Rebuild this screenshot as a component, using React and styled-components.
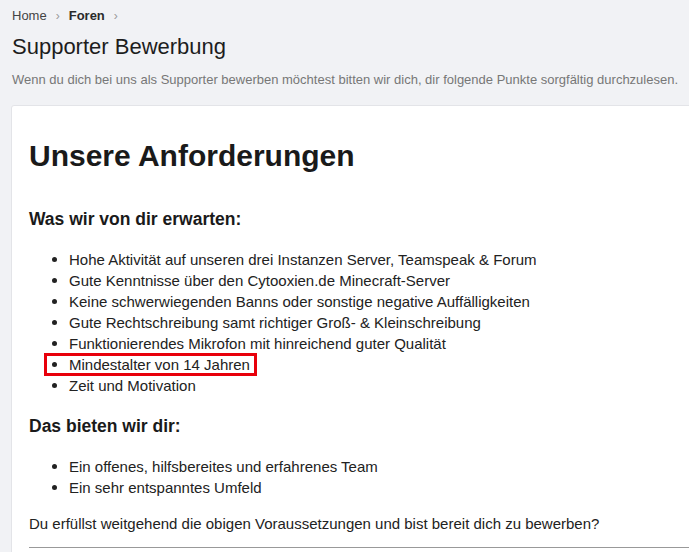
import React from "react";
import styled, { createGlobalStyle } from "styled-components";

const GlobalStyle = createGlobalStyle`
  html, body {
    margin: 0;
    padding: 0;
    background: #f1f2f5;
    overflow: hidden;
    font-family: "Liberation Sans", Arial, sans-serif;
    color: #1c1c1c;
  }
`;

const Page = styled.div`
  padding: 0 0 0 11px;
  width: 720px;
  height: 552px;
`;

const Breadcrumb = styled.nav`
  display: flex;
  align-items: center;
  gap: 7px;
  padding: 7px 0 0 1px;
  font-size: 13px;
  height: 17px;
  color: #333;
`;

const Crumb = styled.span`
  font-weight: ${(p) => (p.$bold ? 700 : 400)};
  color: ${(p) => (p.$bold ? "#2a2a2a" : "#444")};
`;

const Sep = styled.span`
  color: #9a9a9a;
  font-size: 12px;
  margin: 0 2px;
`;

const Title = styled.h1`
  margin: 10px 0 0 1px;
  font-size: 22px;
  font-weight: 400;
  color: #1d1d1d;
`;

const Subtitle = styled.p`
  margin: 12px 0 0 1px;
  font-size: 13px;
  color: #777;
`;

const Card = styled.div`
  margin-top: 18px;
  background: #fff;
  border: 1px solid #e3e4e8;
  border-radius: 3px;
  padding: 33px 18px 0 17px;
  min-height: 460px;
`;

const Heading = styled.h2`
  margin: 0;
  font-size: 30px;
  font-weight: 700;
  color: #1a1a1a;
`;

const SubHeading = styled.h3`
  margin: ${(p) => p.$top} 0 0 0;
  font-size: 17.5px;
  font-weight: 700;
  color: #1a1a1a;
`;

const List = styled.ul`
  margin: 19px 0 0 0;
  padding-left: 40px;
  font-size: 15px;
  line-height: 21px;
  color: #222;
`;

const Item = styled.li`
  position: relative;
  width: max-content;

  &::marker {
    font-size: 17px;
  }
`;

const Mark = styled.span`
  position: absolute;
  left: -25px;
  right: -7px;
  top: -1px;
  bottom: -1px;
  border: 3px solid #e8000b;
`;

const Text = styled.p`
  margin: 17px 0 0 0;
  font-size: 15px;
  color: #222;
`;

const Rule = styled.hr`
  margin: 15px 0 0 0;
  border: 0;
  border-top: 1px solid #999;
`;

const expectations = [
  "Hohe Aktivität auf unseren drei Instanzen Server, Teamspeak & Forum",
  "Gute Kenntnisse über den Cytooxien.de Minecraft-Server",
  "Keine schwerwiegenden Banns oder sonstige negative Auffälligkeiten",
  "Gute Rechtschreibung samt richtiger Groß- & Kleinschreibung",
  "Funktionierendes Mikrofon mit hinreichend guter Qualität",
  "Mindestalter von 14 Jahren",
  "Zeit und Motivation",
];

const offers = [
  "Ein offenes, hilfsbereites und erfahrenes Team",
  "Ein sehr entspanntes Umfeld",
];

export default function App() {
  return (
    <>
      <GlobalStyle />
      <Page>
        <Breadcrumb>
          <Crumb>Home</Crumb>
          <Sep>›</Sep>
          <Crumb $bold>Foren</Crumb>
          <Sep>›</Sep>
        </Breadcrumb>
        <Title>Supporter Bewerbung</Title>
        <Subtitle>
          Wenn du dich bei uns als Supporter bewerben möchtest bitten wir dich, dir folgende Punkte sorgfältig durchzulesen.
        </Subtitle>
        <Card>
          <Heading>Unsere Anforderungen</Heading>
          <SubHeading $top="36px">Was wir von dir erwarten:</SubHeading>
          <List>
            {expectations.map((e) => (
              <Item key={e}>
                {e}
                {e.startsWith("Mindestalter") && <Mark />}
              </Item>
            ))}
          </List>
          <SubHeading $top="20px">Das bieten wir dir:</SubHeading>
          <List>
            {offers.map((o) => (
              <Item key={o}>{o}</Item>
            ))}
          </List>
          <Text>Du erfüllst weitgehend die obigen Voraussetzungen und bist bereit dich zu bewerben?</Text>
          <Rule />
        </Card>
      </Page>
    </>
  );
}
